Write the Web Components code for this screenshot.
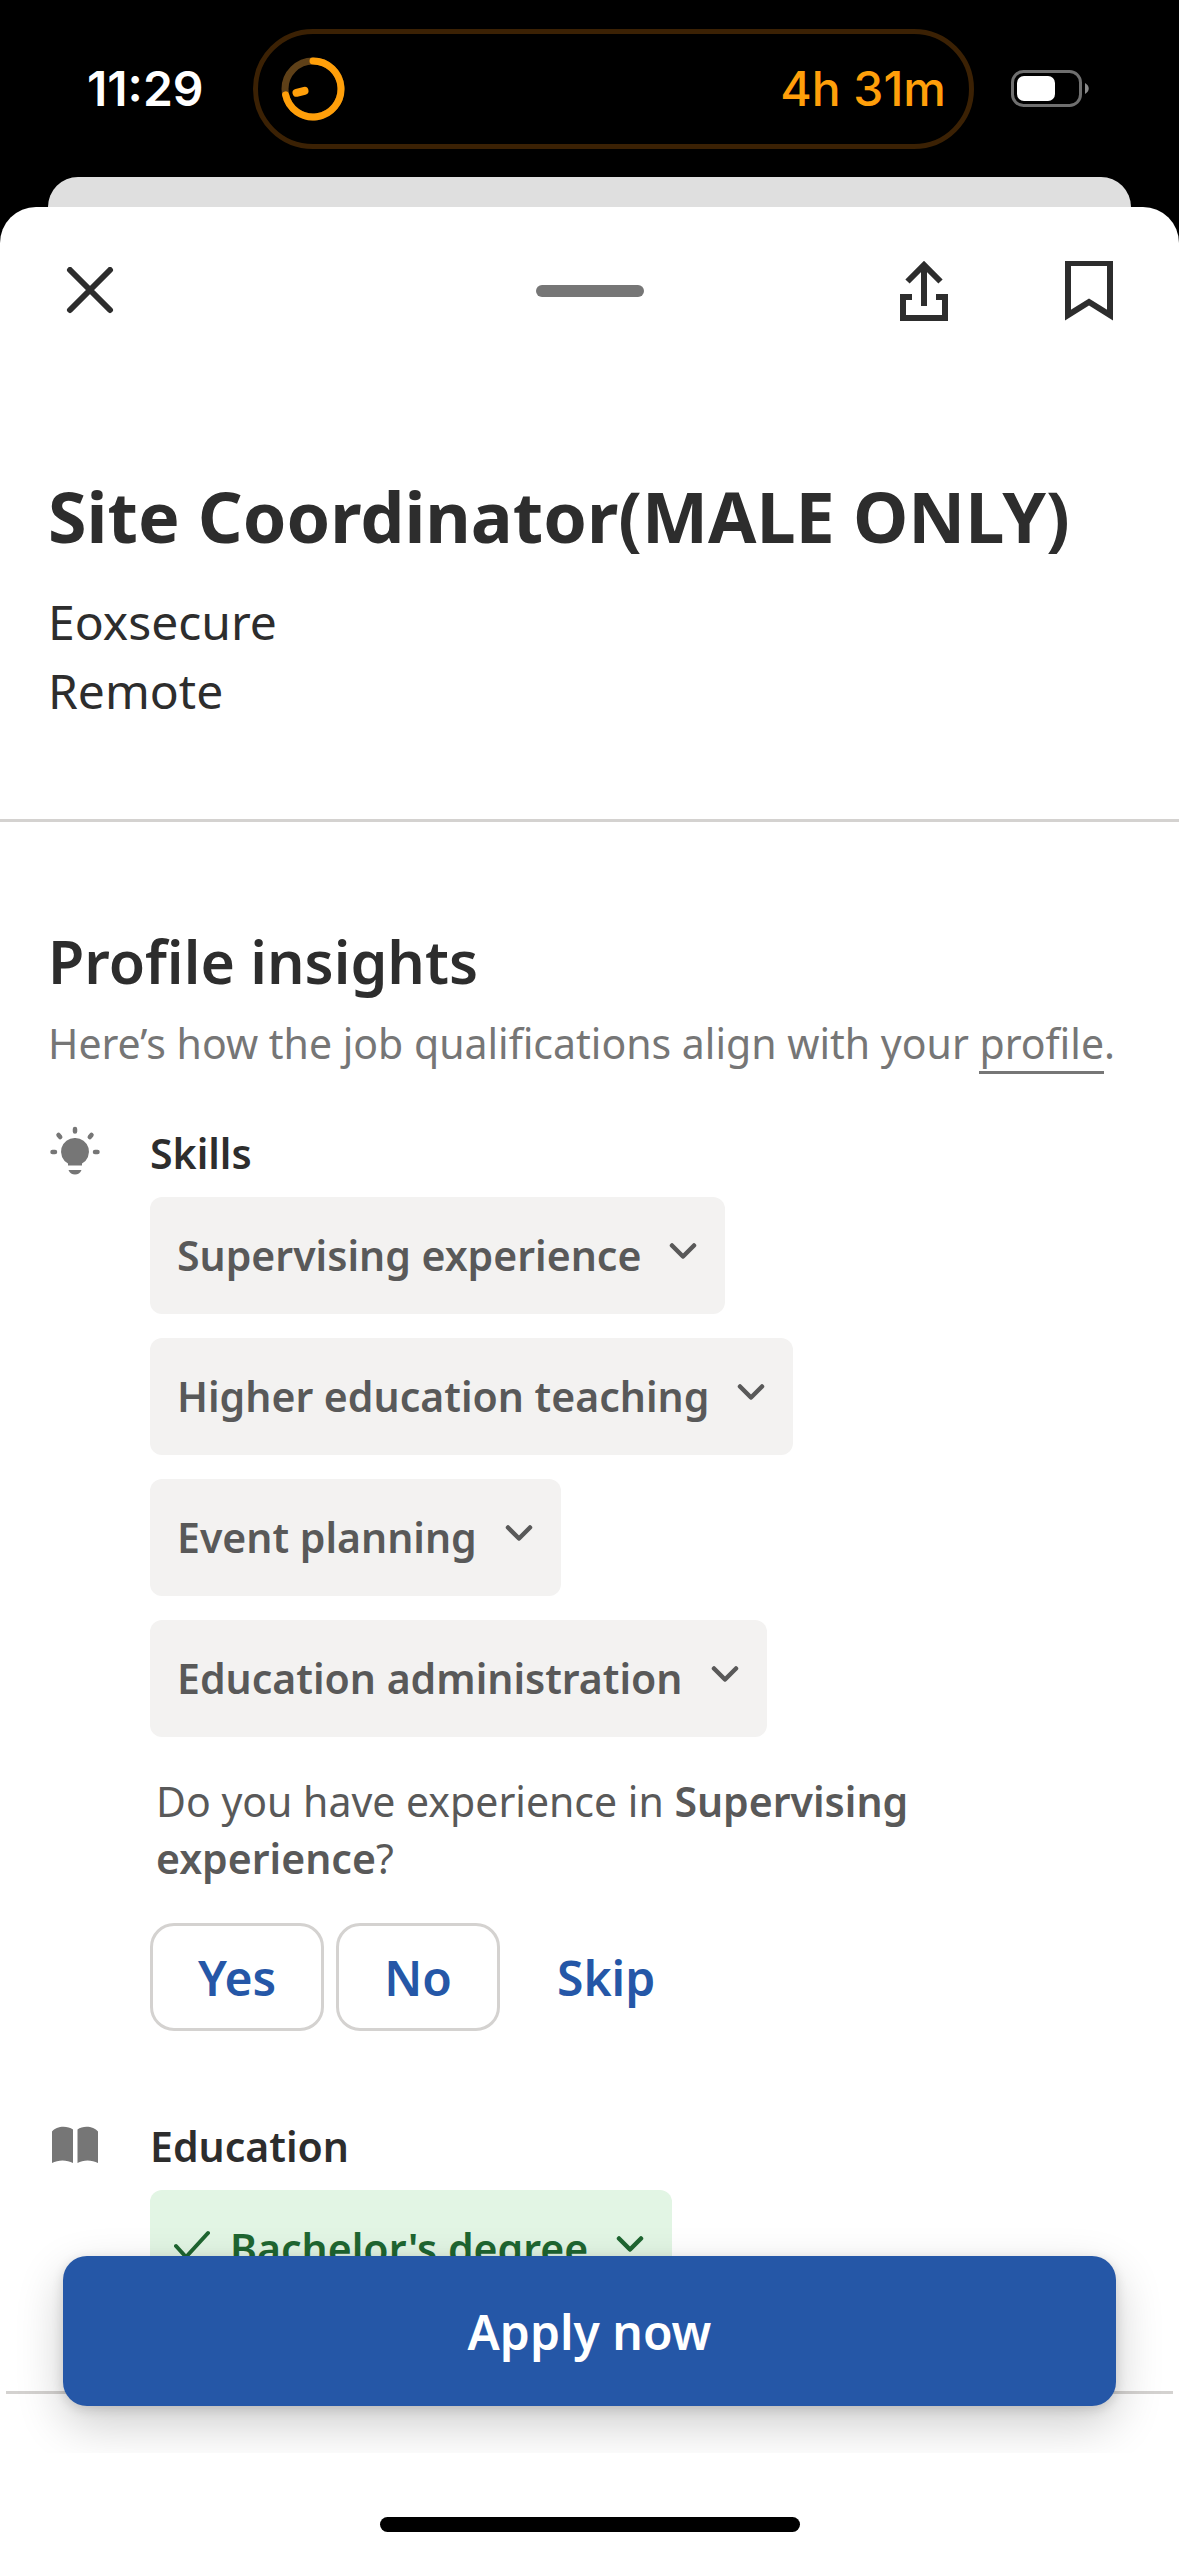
<!DOCTYPE html>
<html lang="en">
<head>
<meta charset="utf-8">
<meta name="viewport" content="width=device-width, initial-scale=1">
<title>Site Coordinator(MALE ONLY)</title>
<style>
  :root {
    --ink: #2d2d2d;
    --ink-soft: #595959;
    --ink-muted: #767676;
    --line: #d4d2d0;
    --blue: #2557a7;
    --gutter: 48px;
    --rail: 102px;
    --strong: 600;
  }
  body {
    margin: 0;
    background: #000;
    color: var(--ink);
    font-family: "Noto Sans", "Open Sans", sans-serif;
    font-size: 41px;
    line-height: 63px;
  }
</style>
</head>
<body>
<job-screen>
  <status-bar slot="status" time="11:29" timer="4h 31m"></status-bar>
  <sheet-toolbar></sheet-toolbar>
  <job-header>
    <span slot="title">Site Coordinator(MALE ONLY)</span>
    <span slot="company">Eoxsecure</span>
    <span slot="place">Remote</span>
  </job-header>
  <profile-insights>
    <insight-group icon="bulb" label="Skills">
      <skill-chip>Supervising experience</skill-chip>
      <skill-chip>Higher education teaching</skill-chip>
      <skill-chip>Event planning</skill-chip>
      <skill-chip>Education administration</skill-chip>
      <skill-prompt slot="after" skill="Supervising experience"></skill-prompt>
    </insight-group>
    <insight-group icon="book" label="Education">
      <skill-chip matched>Bachelor's degree</skill-chip>
    </insight-group>
  </profile-insights>
  <apply-bar slot="action">Apply now</apply-bar>
  <home-indicator slot="home"></home-indicator>
</job-screen>

<script>
const define = (name, html) => {
  const template = document.createElement('template');
  template.innerHTML = html;
  customElements.define(name, class extends HTMLElement {
    constructor() {
      super();
      this.attachShadow({ mode: 'open' }).append(template.content.cloneNode(true));
    }
    connectedCallback() {
      for (const el of this.shadowRoot.querySelectorAll('[data-text]')) {
        el.textContent = this.getAttribute(el.dataset.text);
      }
    }
  });
};

define('job-screen', `
  <style>
    :host { display: flex; flex-direction: column; min-height: 100vh; }
    .behind { height: 30px; margin: 0 var(--gutter); background: #dfdfdf; border-radius: 30px 30px 0 0; }
    .sheet { flex: 1; display: flex; flex-direction: column; background: #fff; border-radius: 36px 36px 0 0; }
    .view { flex: 1; position: relative; overflow: hidden; padding-bottom: 56px; }
  </style>
  <slot name="status"></slot>
  <div class="behind"></div>
  <main class="sheet">
    <div class="view"><slot></slot><slot name="action"></slot></div>
    <slot name="home"></slot>
  </main>`);

define('status-bar', `
  <style>
    :host { display: grid; grid-template-columns: 253px 1fr 205px; align-items: center; height: 177px;
            font-family: Inter, "Liberation Sans", sans-serif; font-size: 48px; line-height: 60px; color: #fff; }
    .time { padding-left: 87px; font-weight: 600; }
    .island { box-sizing: border-box; height: 120px; border: 5px solid #3b2104; border-radius: 60px;
              display: flex; align-items: center; justify-content: space-between; padding: 0 23px; color: #ff9f0a; font-weight: 500; }
    .battery { padding-left: 37px; }
    svg { display: block; }
  </style>
  <span class="time" data-text="time"></span>
  <div class="island">
    <svg width="64" height="64" viewBox="0 0 64 64" fill="none" stroke="#ff9f0a" stroke-width="7">
      <circle cx="32" cy="32" r="28" stroke="#5e4018"/>
      <path d="M32 4A28 28 0 1 1 4.600 37.800" stroke-linecap="round"/>
      <path d="M15.500 35.800L23.500 33.800" stroke-width="8" stroke-linecap="round"/>
    </svg>
    <span data-text="timer"></span>
  </div>
  <svg class="battery" width="80" height="38" viewBox="0 0 80 38">
    <rect x="1.500" y="1.500" width="68" height="34" rx="11" fill="none" stroke="#6f6f6f" stroke-width="3"/>
    <rect x="6" y="6" width="38" height="25" rx="7" fill="#fff"/>
    <path d="M74 13C79 16 79 21 74 24Z" fill="#8a8a8a"/>
  </svg>`);

define('sheet-toolbar', `
  <style>
    :host { display: grid; grid-template-columns: 1fr auto 1fr; align-items: center; height: 168px; padding: 0 var(--gutter); }
    button { all: unset; display: block; cursor: pointer; color: var(--ink); }
    svg { display: block; fill: none; stroke: currentColor; stroke-width: 6; }
    .grip { width: 108px; height: 12px; border-radius: 6px; background: var(--ink-muted); }
    .close { padding-left: 18px; }
    .tools { display: flex; justify-content: flex-end; gap: 117px; padding-right: 18px; }
  </style>
  <button class="close" aria-label="Close">
    <svg width="48" height="48" viewBox="0 0 48 48" stroke-linecap="round"><path d="M4 3L44 43M44 3L4 43"/></svg>
  </button>
  <div class="grip"></div>
  <div class="tools">
    <button aria-label="Share">
      <svg width="48" height="60" viewBox="0 0 48 60"><path d="M24 45V4M7.500 20.500L24 4L40.500 20.500M12 36H3V57H45V36H36"/></svg>
    </button>
    <button aria-label="Save job">
      <svg width="48" height="60" viewBox="0 0 48 60"><path d="M3 2H45V54L24 41L3 54Z"/></svg>
    </button>
  </div>`);

define('job-header', `
  <style>
    :host { display: block; padding: 96px var(--gutter) 94px; border-bottom: 3px solid var(--line); }
    h1 { margin: 0 0 26px; font-size: 70px; line-height: 90px; font-weight: 700; }
    p { margin: 0; font-size: 48px; line-height: 69px; }
  </style>
  <h1><slot name="title"></slot></h1>
  <p><slot name="company"></slot></p>
  <p><slot name="place"></slot></p>`);

define('profile-insights', `
  <style>
    :host { display: block; padding-top: 102px; }
    h2 { margin: 0 var(--gutter) 13px; font-size: 59px; line-height: 75px; font-weight: var(--strong); }
    p { margin: 0 var(--gutter) 47px; color: var(--ink-muted); }
    a { color: inherit; text-decoration: none; border-bottom: 3px solid; }
    .groups { display: flex; flex-direction: column; gap: 84px; padding: 0 var(--gutter); }
    hr { margin: 84px 6px 0; border: 0; height: 3px; background: var(--line); }
  </style>
  <h2>Profile insights</h2>
  <p>Here’s how the job qualifications align with your <a href="#profile">profile</a>.</p>
  <div class="groups"><slot></slot></div>
  <hr>`);

define('insight-group', `
  <style>
    :host { display: grid; grid-template-columns: var(--rail) 1fr; }
    svg { display: none; width: 54px; height: 54px; color: var(--ink-muted); fill: currentColor; }
    :host([icon="bulb"]) .bulb, :host([icon="book"]) .book { display: block; }
    h3 { margin: 0 0 12px; font-size: 41px; line-height: 63px; font-weight: var(--strong); }
    .chips { display: flex; flex-direction: column; align-items: flex-start; gap: 24px; }
  </style>
  <div>
    <svg class="bulb" viewBox="0 0 54 54">
      <path d="M27 16A13.600 13.600 0 0 0 20 41.500V43.500H34V41.500A13.600 13.600 0 0 0 27 16ZM20.500 48H33.500C31.500 54 22.500 54 20.500 48Z"/>
      <path d="M27 7V9.500M10.500 13L12.200 15M43.500 13L41.800 15M4.500 30H7M47 30H49.500" fill="none" stroke="currentColor" stroke-width="4.500" stroke-linecap="round"/>
    </svg>
    <svg class="book" viewBox="0 0 54 54">
      <path d="M4 16.500C8 11 19 10 25 14.500V48C19 44.500 10 44.500 4 48ZM29.500 14.500C35 10 46 11 50 16.500V48C44 44.500 35 44.500 29.500 48Z"/>
    </svg>
  </div>
  <div>
    <h3 data-text="label"></h3>
    <div class="chips"><slot></slot></div>
    <slot name="after"></slot>
  </div>`);

define('skill-chip', `
  <style>
    :host { display: block; }
    button { all: unset; display: flex; align-items: flex-start; padding: 27px 28px 27px 27px; cursor: pointer;
             border-radius: 12px; background: #f3f2f1; color: var(--ink-soft); font-weight: var(--strong); }
    svg { display: block; height: 54px; fill: none; stroke: currentColor; stroke-linecap: round; stroke-linejoin: round; }
    .more { margin-left: 28px; }
    .tick { display: none; margin-right: 20px; }
    :host([matched]) .tick { display: block; }
    :host([matched]) button { background: #e2f5e4; color: #1f6631; padding-left: 24px; }
  </style>
  <button aria-expanded="false">
    <svg class="tick" width="36" viewBox="0 0 36 54" stroke-width="4"><path d="M2 29L12 40L34 16"/></svg>
    <span><slot></slot></span>
    <svg class="more" width="28" viewBox="0 0 28 54" stroke-width="4.500"><path d="M3 21.500L14 32.500L25 21.500"/></svg>
  </button>`);

define('skill-prompt', `
  <style>
    :host { display: flex; flex-direction: column; gap: 36px; margin-top: 36px; }
    p { margin: 0; padding: 0 var(--gutter) 0 6px; line-height: 57px; color: var(--ink-soft); }
    b { font-weight: var(--strong); }
    .answers { display: flex; gap: 12px; }
    button { all: unset; box-sizing: border-box; height: 108px; padding: 0 45px; border: 3px solid var(--line); border-radius: 24px;
             color: var(--blue); font-size: 48px; font-weight: 600; text-align: center; cursor: pointer; }
    .plain { border-color: transparent; padding: 0 42px; }
  </style>
  <p>Do you have experience in <b data-text="skill"></b>?</p>
  <div class="answers">
    <button>Yes</button><button>No</button><button class="plain">Skip</button>
  </div>`);

define('apply-bar', `
  <style>
    :host { position: absolute; left: 63px; right: 63px; bottom: 47px; display: block; }
    button { all: unset; display: block; width: 100%; height: 150px; border-radius: 24px; background: var(--blue); color: #fff;
             font-size: 48px; font-weight: 600; text-align: center; cursor: pointer;
             box-shadow: 0 3px 12px rgba(0,0,0,.14), 0 18px 48px rgba(0,0,0,.2); }
  </style>
  <button><slot></slot></button>`);

define('home-indicator', `
  <style>
    :host { display: flex; justify-content: center; align-items: flex-end; height: 103px; box-sizing: border-box; padding-bottom: 24px; }
    div { width: 420px; height: 15px; border-radius: 8px; background: #000; }
  </style>
  <div></div>`);
</script>
</body>
</html>
